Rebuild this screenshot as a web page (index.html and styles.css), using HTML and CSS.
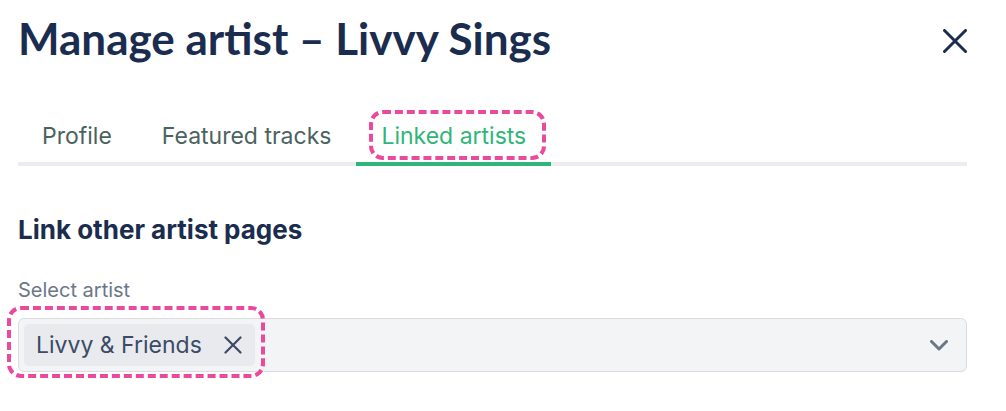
FILE: index.html
```html
<!DOCTYPE html>
<html lang="en">
<head>
<meta charset="utf-8">
<title>Manage artist</title>
<link rel="stylesheet" href="styles.css">
</head>
<body>
<div class="modal">
  <header class="modal-header">
    <h1 class="title">Manage artist – Livvy Sings</h1>
    <button class="close" aria-label="Close">
      <svg width="24" height="24" viewBox="0 0 24 24"><path d="M1.5 1.5 L22.5 22.5 M22.5 1.5 L1.5 22.5" stroke="#1b2d4f" stroke-width="3" stroke-linecap="round"/></svg>
    </button>
  </header>
  <nav class="tabs">
    <span class="tab">Profile</span>
    <span class="tab">Featured tracks</span>
    <span class="tab active">Linked artists<span class="highlight"></span></span>
  </nav>
  <section class="section">
    <h2 class="section-title">Link other artist pages</h2>
    <label class="label">Select artist</label>
    <div class="select">
      <span class="chip">Livvy &amp; Friends
        <svg class="chip-x" width="18" height="18" viewBox="0 0 18 18"><path d="M1.5 1.5 L16.5 16.5 M16.5 1.5 L1.5 16.5" stroke="#3c4a66" stroke-width="2.2" stroke-linecap="round"/></svg>
        <span class="highlight chip-highlight"></span>
      </span>
      <svg class="chevron" width="18" height="11" viewBox="0 0 18 11"><path d="M1.5 1.5 L9 9 L16.5 1.5" fill="none" stroke="#6b7789" stroke-width="3" stroke-linecap="round" stroke-linejoin="round"/></svg>
    </div>
  </section>
</div>
</body>
</html>
```
FILE: styles.css
```css
* { box-sizing: border-box; }
body {
  margin: 0;
  background: #ffffff;
  font-family: Inter, "Open Sans", sans-serif;
}
.modal {
  padding: 10px 39px 30px 18px;
}
.modal-header {
  display: flex;
  justify-content: space-between;
  align-items: flex-start;
}
.title {
  margin: 0;
  font-family: Lato, sans-serif;
  font-size: 44px;
  line-height: 56px;
  font-weight: 700;
  color: #1b2d4f;
}
.close {
  border: 0;
  background: none;
  padding: 0;
  margin-top: 19px;
  width: 24px;
  height: 24px;
  display: flex;
}
.tabs {
  margin-top: 54px;
  display: flex;
  border-bottom: 4px solid #ececf0;
}
.tab {
  position: relative;
  padding: 0 25px 10px;
  font-size: 23px;
  line-height: 32px;
  color: #4a6360;
  margin-bottom: -4px;
  border-bottom: 4px solid transparent;
}
.tab:first-child { padding-left: 24px; }
.tab.active {
  color: #2fb57a;
  border-bottom-color: #2fb57a;
}
.highlight {
  position: absolute;
  left: 13px;
  right: 5px;
  top: -10px;
  bottom: 2px;
  border: 4px dashed #ea4a9c;
  border-radius: 14px;
}
.section-title {
  margin: 48px 0 0;
  font-size: 26px;
  line-height: 32px;
  font-weight: 700;
  color: #1b2d4f;
}
.label {
  display: block;
  margin-top: 32px;
  font-size: 20px;
  line-height: 24px;
  color: #6b7789;
}
.select {
  margin-top: 16px;
  height: 54px;
  border: 1.5px solid #d9dbdf;
  border-radius: 6px;
  background: #f3f4f6;
  display: flex;
  align-items: center;
  justify-content: space-between;
  padding: 0 18px 0 5px;
}
.chip {
  position: relative;
  display: flex;
  align-items: center;
  height: 42px;
  padding: 0 13px 0 12px;
  gap: 22px;
  background: #e8eaee;
  border-radius: 5px;
  font-size: 23px;
  color: #3c4a66;
}
.chip-highlight {
  left: -17px;
  right: -10px;
  top: -18px;
  bottom: -12px;
}
```
